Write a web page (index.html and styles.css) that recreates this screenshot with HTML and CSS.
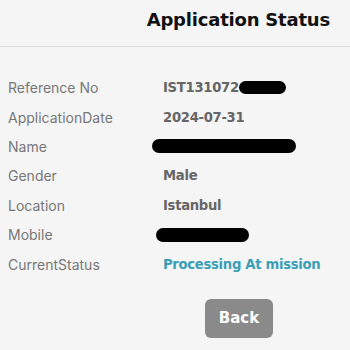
FILE: index.html
```html
<!DOCTYPE html>
<html>
<head>
<meta charset="utf-8">
<link rel="stylesheet" href="styles.css">
</head>
<body>
<header class="header">
  <h1 class="title">Application Status</h1>
</header>
<main class="content">
  <div class="rows">
    <div class="row"><span class="label">Reference No</span><span class="value">IST131072<span class="redact redact-ref"></span></span></div>
    <div class="row"><span class="label">ApplicationDate</span><span class="value">2024-07-31</span></div>
    <div class="row"><span class="label">Name</span><span class="value"><span class="redact redact-name"></span></span></div>
    <div class="row"><span class="label">Gender</span><span class="value">Male</span></div>
    <div class="row"><span class="label">Location</span><span class="value">Istanbul</span></div>
    <div class="row"><span class="label">Mobile</span><span class="value"><span class="redact redact-mobile"></span></span></div>
    <div class="row"><span class="label">CurrentStatus</span><span class="value status">Processing At mission</span></div>
  </div>
  <div class="actions"><button class="back">Back</button></div>
</main>
</body>
</html>
```
FILE: styles.css
```css
html, body { margin: 0; padding: 0; background: #f5f5f5; }
body { font-family: "Inter", "Liberation Sans", sans-serif; width: 350px; height: 350px; overflow: hidden; }
.header { height: 46px; border-bottom: 1px solid #dcdcdc; display: flex; justify-content: flex-end; padding-right: 20px; }
.title { margin: 0; padding-top: 9px; font-family: "DejaVu Sans", sans-serif; font-weight: 700; font-size: 18px; color: #111; letter-spacing: -0.2px; }
.content { padding: 26px 0 0 8px; }
.rows { display: flex; flex-direction: column; }
.row { display: flex; align-items: center; height: 29.4px; }
.label { width: 155px; font-size: 14px; color: #777; }
.value { display: flex; align-items: center; font-weight: 700; color: #666; font-family: "DejaVu Sans", sans-serif; font-size: 13.2px; letter-spacing: -0.3px; }
.status { color: #3a9fb5; }
.redact { display: inline-block; background: #000; border-radius: 7px; height: 13px; }
.redact-ref { width: 47px; margin-left: 0; }
.redact-name { width: 144px; height: 14px; margin-left: -11px; }
.redact-mobile { width: 93px; height: 14px; margin-left: -7px; }
.actions { display: flex; justify-content: flex-start; padding-left: 197px; margin-top: 20px; }
.back { width: 68px; height: 39px; border: none; border-radius: 6px; background: #8a8a8a; color: #fff; font-family: "DejaVu Sans", sans-serif; font-weight: 700; font-size: 15px; }
```
